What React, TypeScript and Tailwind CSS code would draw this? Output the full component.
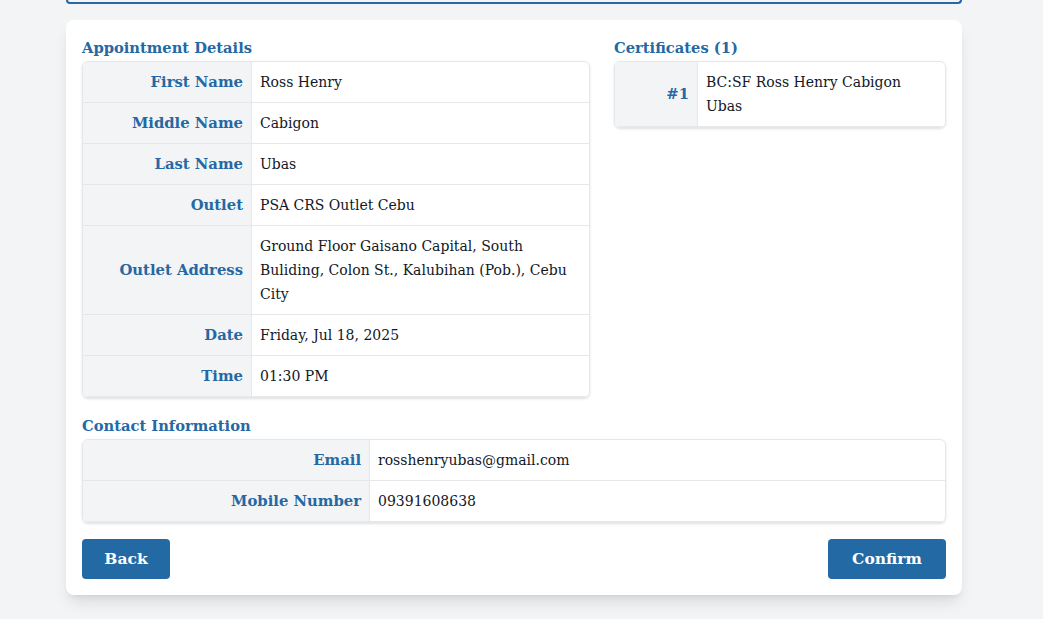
const blue = "text-[#2568a3]";

function Row({ label, value, labelW }: { label: string; value: React.ReactNode; labelW: string }) {
  return (
    <div className="flex border-b border-[#e5e7eb]">
      <div className={`${labelW} shrink-0 bg-[#f3f4f6] border-r border-[#e5e7eb] px-2 py-2 flex items-center justify-end font-bold text-[14.8px] ${blue}`}>
        {label}
      </div>
      <div className="flex-1 px-2 py-2 text-[#111827]">{value}</div>
    </div>
  );
}

function Table({ rows, labelW }: { rows: [string, React.ReactNode][]; labelW: string }) {
  return (
    <div className="border border-[#e5e7eb] rounded-md overflow-hidden shadow-sm">
      {rows.map(([l, v], i) => (
        <Row key={`row-${i}`} label={l} value={v} labelW={labelW} />
      ))}
    </div>
  );
}

export default function App() {
  return (
    <div
      className="min-h-[619px] bg-[#f3f4f6] text-[14px] leading-6"
      style={{ fontFamily: '"DejaVu Serif", serif' }}
    >
      <div className="w-[896px] ml-[66px]">
        <div className="h-1 border-x-2 border-b-2 border-[#2568a3] rounded-b-lg" />
        <div className="mt-4 bg-white rounded-lg shadow-lg p-4">
          <div className="flex gap-6">
            <div className="w-[508px]">
              <h2 className={`font-bold text-[14.7px] h-6 mb-px ${blue}`}>Appointment Details</h2>
              <Table
                labelW="w-[169px]"
                rows={[
                  ["First Name", "Ross Henry"],
                  ["Middle Name", "Cabigon"],
                  ["Last Name", "Ubas"],
                  ["Outlet", "PSA CRS Outlet Cebu"],
                  ["Outlet Address", "Ground Floor Gaisano Capital, South Buliding, Colon St., Kalubihan (Pob.), Cebu City"],
                  ["Date", "Friday, Jul 18, 2025"],
                  ["Time", "01:30 PM"],
                ]}
              />
            </div>
            <div className="flex-1">
              <h2 className={`font-bold text-[14.7px] h-6 mb-px ${blue}`}>Certificates (1)</h2>
              <Table labelW="w-[83px]" rows={[["#1", "BC:SF Ross Henry Cabigon Ubas"]]} />
            </div>
          </div>
          <div className="mt-4">
            <h2 className={`font-bold text-[14.7px] h-6 mb-px ${blue}`}>Contact Information</h2>
            <Table
              labelW="w-[287px]"
              rows={[
                ["Email", "rosshenryubas@gmail.com"],
                ["Mobile Number", "09391608638"],
              ]}
            />
          </div>
          <div className="mt-4 flex justify-between">
            <button className="h-10 w-[88px] rounded bg-[#2369a3] text-white font-bold text-[15.5px]">Back</button>
            <button className="h-10 w-[118px] rounded bg-[#2369a3] text-white font-bold text-[15.5px]">Confirm</button>
          </div>
        </div>
      </div>
    </div>
  );
}
